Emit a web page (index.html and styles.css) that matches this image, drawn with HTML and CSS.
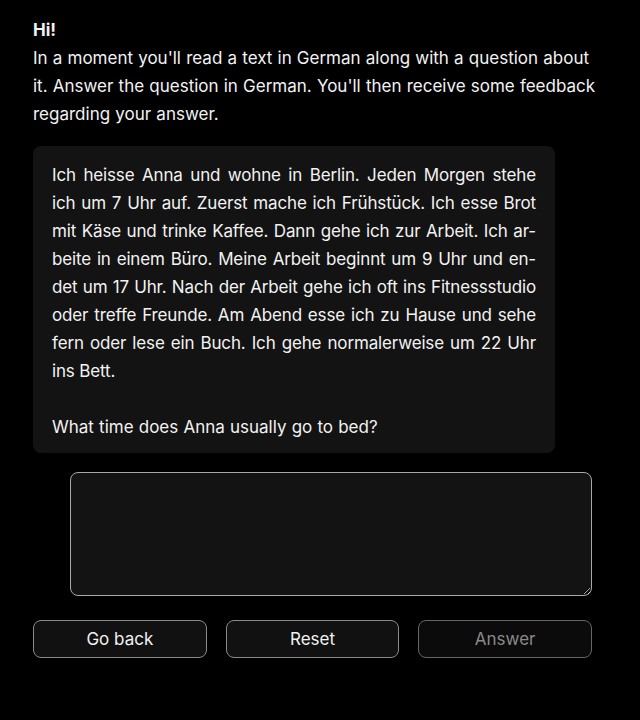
FILE: index.html
```html
<!DOCTYPE html>
<html lang="en">
<head>
<meta charset="utf-8">
<link rel="stylesheet" href="styles.css">
</head>
<body>
<main class="page">
  <div class="intro">
    <strong class="hi">Hi!</strong>
    <p>In a moment you'll read a text in German along with a question about it. Answer the question in German. You'll then receive some feedback regarding your answer.</p>
  </div>
  <section class="card">
    <p class="story" lang="de">
      <span class="ln">Ich heisse Anna und wohne in Berlin. Jeden Morgen stehe</span>
      <span class="ln">ich um 7 Uhr auf. Zuerst mache ich Frühstück. Ich esse Brot</span>
      <span class="ln">mit Käse und trinke Kaffee. Dann gehe ich zur Arbeit. Ich ar-</span>
      <span class="ln">beite in einem Büro. Meine Arbeit beginnt um 9 Uhr und en-</span>
      <span class="ln">det um 17 Uhr. Nach der Arbeit gehe ich oft ins Fitnessstudio</span>
      <span class="ln">oder treffe Freunde. Am Abend esse ich zu Hause und sehe</span>
      <span class="ln">fern oder lese ein Buch. Ich gehe normalerweise um 22 Uhr</span>
      <span class="ln last">ins Bett.</span>
    </p>
    <p class="question">What time does Anna usually go to bed?</p>
  </section>
  <textarea class="answer-box"></textarea>
  <div class="actions">
    <button class="btn">Go back</button>
    <button class="btn">Reset</button>
    <button class="btn disabled" disabled>Answer</button>
  </div>
</main>
</body>
</html>
```
FILE: styles.css
```css
html, body {
  margin: 0;
  padding: 0;
  background: #000;
}
body {
  color: #f2f2f2;
  font-family: Inter, "Helvetica Neue", Arial, sans-serif;
  font-size: 17px;
  word-spacing: 0.4px;
  line-height: 28px;
}
.page {
  padding: 16px 40px 0 33px;
  display: flex;
  flex-direction: column;
}
.intro p {
  margin: 0;
}
.hi {
  display: block;
  font-weight: 700;
}
.card {
  margin-top: 18px;
  width: 522px;
  box-sizing: border-box;
  background: #131313;
  border-radius: 8px;
  padding: 15px 19px 12px 19px;
}
.story {
  margin: 0;
  letter-spacing: -0.15px;
  word-spacing: 0;
}
.ln {
  display: block;
  white-space: nowrap;
  text-align: justify;
  text-align-last: justify;
}
.ln.last {
  text-align-last: left;
}
.question {
  margin: 28px 0 0 0;
}
.answer-box {
  margin: 19px 0 0 37px;
  width: 522px;
  height: 124px;
  box-sizing: border-box;
  background: #131313;
  border: 1px solid #a8a8a8;
  border-radius: 8px;
  color: #f2f2f2;
  font: inherit;
  padding: 8px 12px;
  resize: both;
}
.actions {
  margin-top: 24px;
  display: flex;
  gap: 19px;
  width: 559px;
}
.btn {
  flex: 1;
  height: 38px;
  background: #111;
  border: 1px solid #8a8a8a;
  border-radius: 8px;
  color: #f2f2f2;
  font-family: Inter, "Helvetica Neue", Arial, sans-serif;
  font-size: 17px;
}
.btn.disabled {
  color: #8a8a8a;
  background: #0b0b0b;
  border-color: #666;
}
```
